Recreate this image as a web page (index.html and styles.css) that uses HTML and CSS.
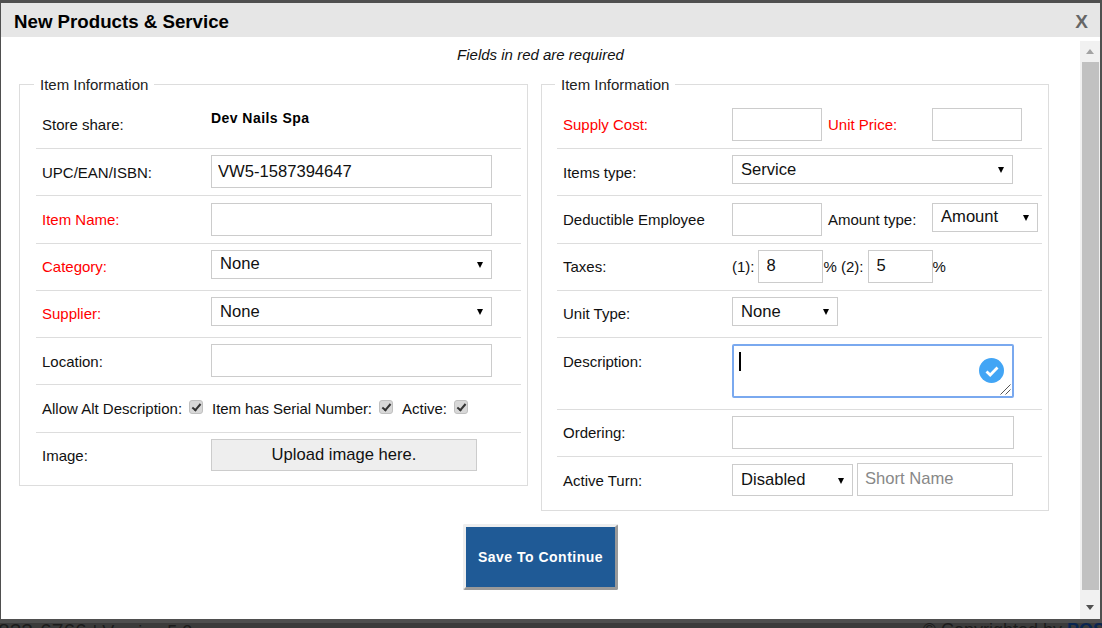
FILE: index.html
```html
<!DOCTYPE html>
<html lang="en">
<head>
    <meta charset="UTF-8">
    <title>New Products &amp; Service</title>
    <link rel="stylesheet" href="styles.css">
</head>
<body>
    <!-- Page behind the dialog, mostly covered -->
    <div class="page-footer">
        <span class="footer-left">833-6766 <small>| Version 5.2</small></span>
        <span class="footer-right">© Copyrighted by <b>POS</b></span>
    </div>

    <div class="modal">
        <div class="modal-head">
            <h1>New Products &amp; Service</h1>
            <span class="close">X</span>
        </div>
        <div class="modal-body">
            <div class="modal-content">
                <p class="note">Fields in red are required</p>
                <div class="columns">
                    <!-- Left column -->
                    <fieldset class="box box-left">
                        <legend>Item Information</legend>
                        <div class="row row-first">
                            <label class="lbl">Store share:</label>
                            <b class="store">Dev Nails Spa</b>
                        </div>
                        <div class="row">
                            <label class="lbl">UPC/EAN/ISBN:</label>
                            <input class="inp w-281" type="text" value="VW5-1587394647">
                        </div>
                        <div class="row">
                            <label class="lbl req">Item Name:</label>
                            <input class="inp w-281" type="text">
                        </div>
                        <div class="row">
                            <label class="lbl req">Category:</label>
                            <div class="sel w-281">None</div>
                        </div>
                        <div class="row">
                            <label class="lbl req">Supplier:</label>
                            <div class="sel w-281">None</div>
                        </div>
                        <div class="row">
                            <label class="lbl">Location:</label>
                            <input class="inp w-281" type="text">
                        </div>
                        <div class="row">
                            <label class="txt">Allow Alt Description:</label>
                            <input class="chk" type="checkbox" checked>
                            <label class="txt chk-label serial">Item has Serial Number:</label>
                            <input class="chk" type="checkbox" checked>
                            <label class="txt chk-label">Active:</label>
                            <input class="chk" type="checkbox" checked>
                        </div>
                        <div class="row row-last">
                            <label class="lbl">Image:</label>
                            <button class="upload" type="button">Upload image here.</button>
                        </div>
                    </fieldset>

                    <!-- Right column -->
                    <fieldset class="box box-right">
                        <legend>Item Information</legend>
                        <div class="row row-first">
                            <label class="lbl req">Supply Cost:</label>
                            <input class="inp w-90" type="text">
                            <label class="txt sub-lbl req">Unit Price:</label>
                            <input class="inp w-90" type="text">
                        </div>
                        <div class="row">
                            <label class="lbl">Items type:</label>
                            <div class="sel w-281">Service</div>
                        </div>
                        <div class="row">
                            <label class="lbl">Deductible Employee</label>
                            <input class="inp w-90" type="text">
                            <label class="txt sub-lbl">Amount type:</label>
                            <div class="sel w-106">Amount</div>
                        </div>
                        <div class="row">
                            <label class="lbl">Taxes:</label>
                            <span class="txt tax">(1):</span>
                            <input class="inp w-65" type="text" value="8">
                            <span class="txt tax tax-mid">% (2):</span>
                            <input class="inp w-65" type="text" value="5">
                            <span class="txt">%</span>
                        </div>
                        <div class="row">
                            <label class="lbl">Unit Type:</label>
                            <div class="sel w-106">None</div>
                        </div>
                        <div class="row row-desc">
                            <label class="lbl">Description:</label>
                            <div class="desc">
                                <span class="caret"></span>
                                <span class="desc-ok">
                                    <svg width="14" height="14" viewBox="0 0 14 14"><path d="M1.5 7.5 5.2 11 12.5 3.6" fill="none" stroke="#fff" stroke-width="2.8"/></svg>
                                </span>
                                <svg class="grip" width="11" height="11" viewBox="0 0 11 11"><path d="M0.5 10.5 10.5 0.5M5.5 10.5 10.5 5.5" stroke="#555" stroke-width="1"/></svg>
                            </div>
                        </div>
                        <div class="row">
                            <label class="lbl">Ordering:</label>
                            <input class="inp w-282" type="text">
                        </div>
                        <div class="row row-last">
                            <label class="lbl">Active Turn:</label>
                            <div class="sel w-121">Disabled</div>
                            <input class="inp w-156" type="text" placeholder="Short Name">
                        </div>
                    </fieldset>
                </div>
                <div class="actions">
                    <button class="save" type="button">Save To Continue</button>
                </div>
            </div>
            <div class="scrollbar">
                <span class="arrow arrow-up"></span>
                <div class="thumb"></div>
                <span class="arrow arrow-down"></span>
            </div>
        </div>
    </div>
</body>
</html>
```

FILE: styles.css
```css
body {
    margin: 0;
    height: 628px;
    overflow: hidden;
    position: relative;
    background-color: #4f4f4f;
    font-family: "Liberation Sans", Arial, sans-serif;
    font-size: 15px;
    color: #111;
}

/* Footer of the page behind */
.page-footer {
    position: absolute;
    left: 0;
    right: 0;
    top: 623px;
    height: 5px;
    overflow: hidden;
    background-color: #3b3b3b;
    color: #1c1c1c;
    font-size: 21px;
    line-height: 15px;
    display: flex;
    justify-content: space-between;
}
.footer-left {
    margin-left: -2px;
}
.footer-left small {
    font-size: 18px;
}
.footer-right {
    font-size: 18px;
    margin-right: -3px;
}
.footer-right b {
    color: #0a2550;
}

/* Dialog */
.modal {
    position: absolute;
    left: 1px;
    top: 3px;
    width: 1099px;
    height: 616px;
    background-color: #fff;
    display: flex;
    flex-direction: column;
}
.modal-head {
    height: 34px;
    box-sizing: border-box;
    flex: none;
    background-color: #e6e6e6;
    display: flex;
    justify-content: space-between;
    align-items: center;
    padding: 4px 12px 0 13px;
}
.modal-head h1 {
    margin: 0;
    font-size: 18.7px;
    font-weight: bold;
    color: #000;
}
.close {
    font-size: 19px;
    font-weight: bold;
    color: #666;
}
.modal-body {
    flex: 1;
    display: flex;
    min-height: 0;
}
.modal-content {
    flex: 1;
    min-width: 0;
}
.note {
    margin: 0;
    padding-top: 10px;
    height: 29px;
    text-align: center;
    font-style: italic;
    line-height: 16px;
}

.columns {
    display: flex;
    align-items: flex-start;
    padding-left: 18px;
    gap: 13px;
}
.box {
    margin: 0;
    min-width: 0;
    box-sizing: border-box;
    border: 1px solid #ddd;
}
.box-left {
    width: 509px;
    padding: 0 6px 0 16px;
}
.box-right {
    width: 508px;
    padding: 0 6px 0 15px;
}
.box legend {
    padding: 0 6px;
    margin-left: -2px;
    font-size: 15px;
    line-height: 17px;
    color: #222;
}

/* Form rows */
.row {
    display: flex;
    align-items: flex-start;
    height: 47.25px;
    box-sizing: border-box;
    border-bottom: 1px solid #ddd;
    padding: 6.4px 0 0 6px;
}
.row-first {
    height: 56px;
    padding-top: 15.4px;
}
.row-desc {
    height: 72px;
}
.row-last {
    border-bottom: none;
    height: 52px;
}
.box-right .row-last {
    height: 53px;
}
.lbl {
    width: 169px;
    flex: none;
    margin-top: 8.2px;
    line-height: 17px;
}
.txt {
    flex: none;
    margin-top: 8.2px;
    line-height: 17px;
}
.row-first .lbl,
.row-first .txt,
.row-desc + .row .lbl {
    margin-top: 7.8px;
}
.req {
    color: #f00;
}
.store {
    font-size: 14px;
    line-height: 17px;
    margin-top: 2px;
    color: #000;
    letter-spacing: 0.45px;
}

.inp {
    box-sizing: border-box;
    height: 33px;
    border: 1px solid #ccc;
    padding: 0 6px;
    font: 16.6px "Liberation Sans", Arial, sans-serif;
    color: #111;
    background: #fff;
    outline: none;
}
.inp::placeholder {
    color: #888;
}
.sel {
    box-sizing: border-box;
    height: 29px;
    border: 1px solid #ccc;
    padding: 0 0 0 8px;
    font-size: 16.6px;
    color: #111;
    display: flex;
    align-items: center;
    position: relative;
    background: #fff;
}
.sel::after {
    content: "";
    position: absolute;
    right: 8px;
    top: 11px;
    border-left: 3.5px solid transparent;
    border-right: 3.5px solid transparent;
    border-top: 6px solid #000;
}
.w-281 { width: 281px; }
.w-282 { width: 282px; }
.w-90 { width: 90px; }
.w-65 { width: 65px; padding-left: 8px; }
.w-106 { width: 106px; }
.w-121 { width: 121px; height: 32px; }
.w-121::after { top: 13px; }
.w-156 { width: 156px; margin: -1px 0 0 4px; padding-left: 7px; }

.sub-lbl {
    width: 110px;
    padding-left: 6px;
    box-sizing: border-box;
}
.tax {
    margin-right: 3px;
}
.tax-mid {
    margin: 8.2px 4px 0 1px;
}

/* Checkboxes are drawn so the grey box and dark tick match */
.chk {
    appearance: none;
    box-sizing: border-box;
    flex: none;
    width: 14px;
    height: 14px;
    margin: 8.4px 0 0 7px;
    background: #d8d8d8;
    border: 1px solid #c0c0c0;
    border-radius: 3px;
    position: relative;
}
.chk::after {
    content: "";
    position: absolute;
    left: 4px;
    top: 1px;
    width: 3px;
    height: 7px;
    border: solid #333;
    border-width: 0 2px 2px 0;
    transform: rotate(40deg);
}
.chk-label {
    margin-left: 9px;
}
.serial {
    letter-spacing: -0.08px;
}
.upload {
    box-sizing: border-box;
    width: 266px;
    height: 32px;
    border: 1px solid #ccc;
    background: #eee;
    font: 16.6px "Liberation Sans", Arial, sans-serif;
    color: #111;
}

/* Focused description box */
.desc {
    box-sizing: border-box;
    width: 282px;
    height: 54px;
    border: 2px solid #7aa9ef;
    border-radius: 2px;
    position: relative;
}
.caret {
    position: absolute;
    left: 5px;
    top: 6px;
    width: 2px;
    height: 19px;
    background: #000;
}
.desc-ok {
    position: absolute;
    right: 8px;
    top: 12px;
    width: 25px;
    height: 25px;
    border-radius: 50%;
    background: #42a5f5;
    display: flex;
    align-items: center;
    justify-content: center;
}
.grip {
    position: absolute;
    right: 1px;
    bottom: 1px;
}

.actions {
    display: flex;
    justify-content: center;
    padding-top: 13px;
}
.save {
    box-sizing: border-box;
    width: 155px;
    height: 66px;
    background: #1f5a96;
    color: #fff;
    font: bold 14px "Liberation Sans", Arial, sans-serif;
    letter-spacing: 0.5px;
    border: 3px solid #eee;
    border-right-color: #999;
    border-bottom-color: #999;
    border-radius: 2px;
}

.scrollbar {
    width: 20px;
    flex: none;
    margin-top: 4px;
    background: #f1f1f1;
    display: flex;
    flex-direction: column;
    align-items: center;
}
.arrow {
    flex: none;
    width: 0;
    height: 0;
    border-left: 4px solid transparent;
    border-right: 4px solid transparent;
}
.arrow-up {
    margin: 8px 0;
    border-bottom: 5px solid #a3a3a3;
}
.arrow-down {
    margin-top: 15px;
    border-top: 5px solid #505050;
}
.thumb {
    flex: none;
    height: 528px;
    width: 17px;
    margin-left: 1px;
    background: #c1c1c1;
}
```
